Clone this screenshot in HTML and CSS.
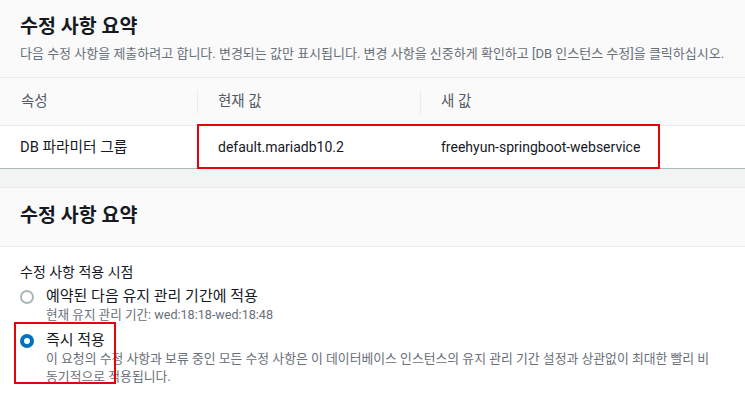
FILE: index.html
```html
<!DOCTYPE html>
<html lang="ko">
<head>
<meta charset="utf-8">
<link rel="stylesheet" href="styles.css">
</head>
<body>
<section class="card">
  <header class="card-head first">
    <h2 class="title">수정 사항 요약</h2>
    <p class="desc">다음 수정 사항을 제출하려고 합니다. 변경되는 값만 표시됩니다. 변경 사항을 신중하게 확인하고 [DB 인스턴스 수정]을 클릭하십시오.</p>
  </header>
  <div class="table">
    <div class="row head">
      <div class="cell c1">속성</div>
      <div class="cell c2 sep">현재 값</div>
      <div class="cell c3 sep">새 값</div>
    </div>
    <div class="row body">
      <div class="cell c1 ko">DB 파라미터 그룹</div>
      <div class="cell c2">default.mariadb10.2</div>
      <div class="cell c3">freehyun-springboot-webservice</div>
      <div class="mark mark-row"></div>
    </div>
  </div>
</section>

<section class="card second">
  <header class="card-head">
    <h2 class="title">수정 사항 요약</h2>
  </header>
  <div class="card-body">
    <div class="field-label">수정 사항 적용 시점</div>
    <div class="option">
      <span class="radio"></span>
      <div class="opt-text">
        <div class="opt-label">예약된 다음 유지 관리 기간에 적용</div>
        <div class="opt-desc">현재 유지 관리 기간: wed:18:18-wed:18:48</div>
      </div>
    </div>
    <div class="option checked-opt">
      <span class="radio checked"></span>
      <div class="opt-text">
        <div class="opt-label">즉시 적용</div>
        <div class="opt-desc long">이 요청의 수정 사항과 보류 중인 모든 수정 사항은 이 데이터베이스 인스턴스의 유지 관리 기간 설정과 상관없이 최대한 빨리 비동기적으로 적용됩니다.</div>
      </div>
      <div class="mark mark-opt"></div>
    </div>
  </div>
</section>
</body>
</html>
```
FILE: styles.css
```css
* { box-sizing: border-box; }
html, body { margin: 0; padding: 0; }
body {
  background: #f2f3f3;
  font-family: Roboto, "Noto Sans CJK KR", sans-serif;
  color: #16191f;
  width: 745px;
  height: 402px;
  overflow: hidden;
}
.card { background: #fff; }
.card-head {
  background: #fafafa;
  border-bottom: 1px solid #eaeded;
  padding: 16px 20px 0 20px;
}
.card-head.first { height: 78px; padding-top: 14px; }
.title {
  margin: 0;
  font-size: 19.5px;
  font-weight: 700;
  line-height: 26px;
  color: #16191f;
}
.desc {
  margin: 6px 0 0 0;
  font-size: 13px;
  line-height: 16px;
  color: #687078;
  white-space: nowrap;
}
.table { border-bottom: 1px solid #aab7b8; }
.row { display: grid; grid-template-columns: 197px 223px 1fr; position: relative; }
.row.head {
  height: 48px;
  background: #fafafa;
  border-bottom: 1px solid #eaeded;
  color: #545b64;
  align-items: center;
}
.row.body { height: 42px; align-items: center; }
.cell { font-size: 14px; line-height: 20px; padding-left: 21px; }
.row.head .cell { font-size: 14.5px; }
.cell.ko { font-size: 14.7px; padding-left: 20px; }
.sep { border-left: 1px solid #eaeded; padding-left: 20px; }
.row.head .sep { height: 24px; display: flex; align-items: center; }
.mark { position: absolute; border: 2px solid #e8000b; pointer-events: none; }
.mark-row { left: 197px; top: -2px; width: 463px; height: 45px; }
.second { margin-top: 18px; border-top: 1px solid #eaeded; }
.second .card-head { height: 59px; padding-top: 15px; }
.card-body { padding: 15px 20px 20px 20px; height: 156px; }
.field-label { font-size: 14px; line-height: 20px; color: #16191f; }
.option { display: flex; align-items: flex-start; position: relative; margin-top: 5px; }
.checked-opt { margin-top: 7px; }
.radio {
  width: 14px; height: 14px;
  border-radius: 50%;
  border: 2px solid #aab7b8;
  background: #fff;
  margin-top: 3px;
  flex: none;
}
.radio.checked { border: 4px solid #0073bb; }
.opt-text { margin-left: 12px; flex: 1; }
.opt-label { font-size: 15px; line-height: 19px; color: #16191f; }
.opt-desc { font-size: 12.6px; line-height: 18px; color: #687078; }
.opt-desc.long { word-break: break-all; font-size: 12.85px; max-width: 671px; }
.mark-opt { left: -6px; top: -9px; width: 102px; height: 62px; }
```
